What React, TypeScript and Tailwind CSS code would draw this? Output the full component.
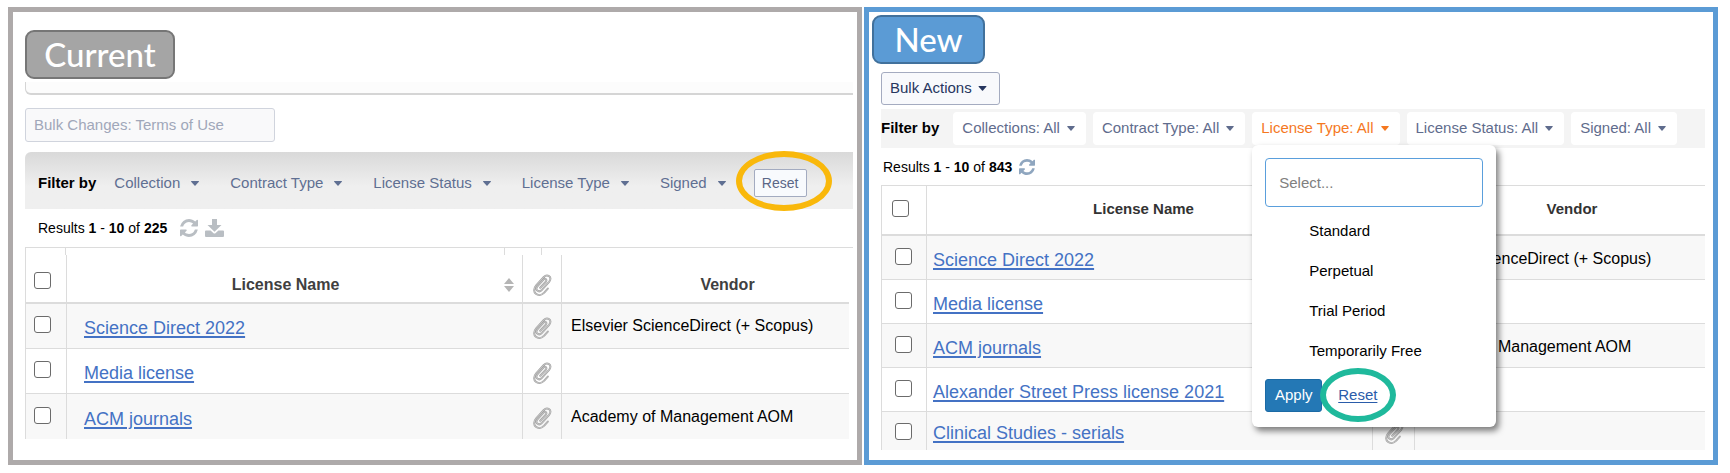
import React from 'react';

interface License {
  name: string;
  vendor: string;
}

const currentFilters = ['Collection', 'Contract Type', 'License Status', 'License Type', 'Signed'];

const newFilters = ['Collections', 'Contract Type', 'License Type', 'License Status', 'Signed'];

const licenseTypes = ['Standard', 'Perpetual', 'Trial Period', 'Temporarily Free'];

const licenses: License[] = [
  { name: 'Science Direct 2022', vendor: 'Elsevier ScienceDirect (+ Scopus)' },
  { name: 'Media license', vendor: '' },
  { name: 'ACM journals', vendor: 'Academy of Management AOM' },
  { name: 'Alexander Street Press license 2021', vendor: '' },
  { name: 'Clinical Studies - serials', vendor: '' },
];

function Caret({ className = '' }: { className?: string }) {
  return (
    <svg viewBox="0 0 10 6" className={`shrink-0 ${className}`} fill="currentColor" aria-hidden="true">
      <path d="M.8 0h8.4q.8.1.4.8L5.6 5.5q-.6.6-1.2 0L.4.8Q0 .1.8 0z" />
    </svg>
  );
}

function RefreshIcon({ className = '' }: { className?: string }) {
  return (
    <svg viewBox="0 0 1536 1536" className={className} fill="currentColor" aria-hidden="true">
      <path d="M1511 928q0 5-1 7-64 268-268 434.500t-478 166.500q-146 0-282.500-55t-243.500-157l-129 129q-19 19-45 19t-45-19-19-45v-448q0-26 19-45t45-19h448q26 0 45 19t19 45-19 45l-137 137q71 66 161 102t187 36q134 0 250-65t186-179q11-17 53-117 8-23 30-23h192q13 0 22.500 9.500t9.500 22.500zm25-800v448q0 26-19 45t-45 19h-448q-26 0-45-19t-19-45 19-45l138-138q-148-137-349-137-134 0-250 65t-186 179q-11 17-53 117-8 23-30 23h-199q-13 0-22.500-9.500t-9.500-22.500v-7q65-268 270-434.500t480-166.500q146 0 284 55.500t245 156.500l130-129q19-19 45-19t45 19 19 45z" />
    </svg>
  );
}

function DownloadIcon({ className = '' }: { className?: string }) {
  return (
    <svg viewBox="0 0 19 18" className={className} fill="currentColor" aria-hidden="true">
      <path d="M7 0h5v6h4.500L9.500 12.800 2.500 6H7z" />
      <path d="M1 11.500h4.600l2.700 2.600q1.200 1 2.400 0l2.700-2.600H18q1 0 1 1V17q0 1-1 1H1q-1 0-1-1v-4.500q0-1 1-1z" />
    </svg>
  );
}

function ClipIcon() {
  const path =
    'M8.200 13.800l5.600-6.100c1.700-1.900-.6-3.800-2.300-2.100L5.600 12c-3.200 3.700 1 7.300 4.300 3.900l7.200-8.100c3.800-4.500-1.600-8.600-5.500-4.600L4.200 11.400c-6 7 2.500 13 8 7.200l3.600-4';
  return (
    <svg viewBox="0 0 20 22" className="mx-auto h-[22px] w-5" fill="none" strokeLinecap="round" aria-hidden="true">
      <path d={path} stroke="#a3a3a3" strokeWidth="2" />
      <path d={path} stroke="#d6d6d6" strokeWidth="0.700" />
    </svg>
  );
}

function SortIcon() {
  return (
    <svg viewBox="0 0 10 14" className="h-[14px] w-[10px] shrink-0" fill="#b5b5b5" aria-hidden="true">
      <path d="M0 6l5-6 5 6zM0 8h10l-5 6z" />
    </svg>
  );
}

function Checkbox({ label }: { label: string }) {
  return (
    <input
      type="checkbox"
      aria-label={label}
      className="block h-[17px] w-[17px] appearance-none rounded-[3px] border border-[#6b6b6b] bg-white"
    />
  );
}

function CurrentPanel() {
  return (
    <section className="border-5 border-[#aeaaaa] pt-[18px] pl-3">
      <h2 className="flex h-[49px] w-[150px] items-center justify-center rounded-[9px] border-2 border-[#767676] bg-[#a5a5a5] font-[Lato,sans-serif] text-[33px] font-medium text-white">
        Current
      </h2>
      <div className="mt-[3px] mr-1 h-[13px] rounded-bl-[6px] border-b-2 border-l border-[#d5d5d5] bg-[#fcfcfc]" />
      <button
        type="button"
        disabled
        className="mt-[13px] flex h-[34px] w-[250px] items-center rounded-[3px] border border-[#d0d4dd] bg-[#f9f9fa] px-2 text-[15px] text-[#a0a7b9]"
      >
        Bulk Changes: Terms of Use
      </button>

      <div className="mt-[10px] mr-1 flex h-[57px] items-center rounded-tl-[6px] bg-linear-to-b from-[#d9d9d9] to-[#efefef] to-60% pt-[5px] pl-[13px] text-[15px]">
        <span className="mr-[18px] font-bold text-black">Filter by</span>
        <div className="flex items-center gap-[30px] text-[#5f6f92]">
          {currentFilters.map(filter => (
            <button key={filter} type="button" className="flex items-center gap-[10px] whitespace-nowrap">
              {filter}
              <Caret className="h-[5px] w-[10px]" />
            </button>
          ))}
        </div>
        <div className="relative ml-[27px]">
          <button
            type="button"
            className="flex h-7 w-[53px] items-center justify-center rounded-[2px] border border-[#a3abc0] bg-[#f8fafd] text-sm text-[#5b6787]"
          >
            Reset
          </button>
          <div className="pointer-events-none absolute -top-[18px] -left-[18px] h-[60px] w-24 rounded-[50%] border-6 border-[#f9b80b]" />
        </div>
      </div>

      <div className="flex h-[38px] items-center pl-[13px] text-sm text-black">
        <p>
          Results <b>1</b> - <b>10</b> of <b>225</b>
        </p>
        <button type="button" aria-label="Refresh" className="ml-[13px] text-[#b9bec3]">
          <RefreshIcon className="h-[18px] w-[18px]" />
        </button>
        <button type="button" aria-label="Download" className="ml-[7px] text-[#b9bec3]">
          <DownloadIcon className="h-[18px] w-[19px]" />
        </button>
      </div>

      <div className="mr-1 flex h-2 border-t border-l border-[#dcdcdc]">
        <div className="w-10 border-r border-[#dcdcdc]" />
        <div className="flex-1 border-r border-[#dcdcdc]" />
        <div className="w-[37px] border-r border-[#dcdcdc]" />
        <div className="w-[311px]" />
      </div>
      <div className="mr-2">
        <table className="w-full table-fixed border-separate border-spacing-0 border-l border-[#dcdcdc]">
          <colgroup>
            <col className="w-[41px]" />
            <col />
            <col className="w-[39px]" />
            <col className="w-[287px]" />
          </colgroup>
          <thead>
            <tr className="h-[49px] text-base text-[#404040]">
              <th className="border-r border-b-2 border-[#dcdcdc] p-0 pt-[3px] pl-2">
                <Checkbox label="Select all licenses" />
              </th>
              <th className="border-r border-b-2 border-[#dcdcdc] p-0 pt-3 pr-2">
                <div className="flex items-center">
                  <span className="flex-1 text-center">License Name</span>
                  <SortIcon />
                </div>
              </th>
              <th className="border-r border-b-2 border-[#dcdcdc] p-0 pt-3">
                <ClipIcon />
              </th>
              <th className="border-b-2 border-[#dcdcdc] p-0 pt-3 pl-11">Vendor</th>
            </tr>
          </thead>
          <tbody>
            {licenses.slice(0, 3).map(license => (
              <tr key={license.name} className="group h-[45px] odd:bg-[#f8f8f8]">
                <td className="border-r border-b border-[#dcdcdc] p-0 pb-[3px] pl-2 group-last:border-b-0">
                  <Checkbox label={license.name} />
                </td>
                <td className="border-r border-b border-[#dcdcdc] p-0 pt-1 pl-[17px] group-last:border-b-0">
                  <a href="#" className="text-lg text-[#4472c4] underline decoration-2 underline-offset-2">
                    {license.name}
                  </a>
                </td>
                <td className="border-r border-b border-[#dcdcdc] p-0 pt-[3px] group-last:border-b-0">
                  <ClipIcon />
                </td>
                <td className="border-b border-[#dcdcdc] p-0 pl-[9px] text-base whitespace-nowrap text-black group-last:border-b-0">
                  {license.vendor}
                </td>
              </tr>
            ))}
          </tbody>
        </table>
      </div>
    </section>
  );
}

function LicenseTypeMenu() {
  return (
    <div className="absolute top-full left-0 z-10 w-[244px] rounded-md bg-white px-[13px] pt-[13px] pb-[15px] text-[15px] text-black shadow-[3px_4px_6px_rgba(0,0,0,0.5)]">
      <input
        type="text"
        aria-label="License type"
        placeholder="Select..."
        className="block h-[49px] w-full rounded-[4px] border border-[#5a9fdc] bg-white px-[13px] text-[15px] placeholder:text-[#808080]"
      />
      <ul className="pt-1">
        {licenseTypes.map(type => (
          <li key={type}>
            <button type="button" className="flex h-10 w-full items-center pl-11">
              {type}
            </button>
          </li>
        ))}
      </ul>
      <div className="mt-2 flex items-center">
        <button
          type="button"
          className="h-[33px] w-[57px] rounded-[3px] border border-[#1b6aa5] bg-[#2478b5] text-[15px] font-medium text-white"
        >
          Apply
        </button>
        <div className="relative ml-4">
          <a href="#" className="text-[#2a5caa] underline underline-offset-2">
            Reset
          </a>
          <div className="pointer-events-none absolute -top-4 -left-[18px] h-[54px] w-[76px] rounded-[50%] border-6 border-[#1fb99c]" />
        </div>
      </div>
    </div>
  );
}

function NewPanel() {
  return (
    <section className="border-5 border-[#5b9bd5] pt-[3px] pr-2 pb-[10px] pl-3">
      <h2 className="-ml-[9px] flex h-[49px] w-[113px] items-center justify-center rounded-[9px] border-2 border-[#41719c] bg-[#5b9bd5] font-[Lato,sans-serif] text-[33px] font-medium text-white">
        New
      </h2>
      <button
        type="button"
        className="mt-2 flex h-[33px] items-center gap-[6px] rounded-[3px] border border-[#a4abc0] bg-[#f8f9fc] pr-3 pl-2 text-[15px] text-[#26365f]"
      >
        Bulk Actions
        <Caret className="h-[5px] w-[9px]" />
      </button>

      <div className="mt-1 flex h-[39px] items-center bg-[#f4f4f4] text-[15px]">
        <span className="mr-[14px] font-bold text-black">Filter by</span>
        <div className="flex gap-[7px]">
          {newFilters.map(filter => {
            const open = filter === 'License Type';
            return (
              <div key={filter} className="relative">
                <button
                  type="button"
                  className={`flex h-[33px] items-center gap-[7px] rounded-[4px] bg-white pr-[11px] pl-[9px] whitespace-nowrap ${
                    open ? 'text-[#f5781f]' : 'text-[#5f6c8d]'
                  }`}
                >
                  {filter}: All
                  <Caret className="h-[5px] w-2" />
                </button>
                {open && <LicenseTypeMenu />}
              </div>
            );
          })}
        </div>
      </div>

      <div className="flex h-[37px] items-center pl-[2px] text-sm text-black">
        <p>
          Results <b>1</b> - <b>10</b> of <b>843</b>
        </p>
        <button type="button" aria-label="Refresh" className="ml-[7px] text-[#8fa6bf]">
          <RefreshIcon className="h-4 w-4" />
        </button>
      </div>

      <table className="w-full table-fixed border-separate border-spacing-0 border-t border-l border-[#dcdcdc]">
        <colgroup>
          <col className="w-[45px]" />
          <col />
          <col className="w-[42px]" />
          <col className="w-[290px]" />
        </colgroup>
        <thead>
          <tr className="h-[50px] text-[15px] text-[#333]">
            <th className="border-r border-b-2 border-[#dcdcdc] p-0 pb-[3px] pl-[10px]">
              <Checkbox label="Select all licenses" />
            </th>
            <th className="border-r border-b-2 border-[#dcdcdc] p-0 pr-3 pb-[2px]">License Name</th>
            <th className="border-r border-b-2 border-[#dcdcdc] p-0">
              <ClipIcon />
            </th>
            <th className="border-b-2 border-[#dcdcdc] p-0 pb-[2px] pl-6">Vendor</th>
          </tr>
        </thead>
        <tbody>
          {licenses.map(license => (
            <tr key={license.name} className="group h-11 last:h-[38px] odd:bg-[#f8f8f8]">
              <td className="border-r border-b border-[#dcdcdc] p-0 pb-[3px] pl-[13px] group-last:border-b-0 group-last:pb-0">
                <Checkbox label={license.name} />
              </td>
              <td className="border-r border-b border-[#dcdcdc] p-0 pt-1 pl-[6px] whitespace-nowrap group-last:border-b-0">
                <a href="#" className="text-lg text-[#4472c4] underline decoration-2 underline-offset-2">
                  {license.name}
                </a>
              </td>
              <td className="border-r border-b border-[#dcdcdc] p-0 pt-1 group-last:border-b-0">
                <ClipIcon />
              </td>
              <td className="border-b border-[#dcdcdc] p-0 pt-[2px] text-base whitespace-nowrap text-black group-last:border-b-0">
                <span className="-ml-[6px]">{license.vendor}</span>
              </td>
            </tr>
          ))}
        </tbody>
      </table>
    </section>
  );
}

export default function App() {
  return (
    <main className="grid grid-cols-2 gap-[2px] bg-white pt-[7px] pr-3 pb-2 pl-2 font-['Liberation_Sans',Arial,sans-serif]">
      <CurrentPanel />
      <NewPanel />
    </main>
  );
}
